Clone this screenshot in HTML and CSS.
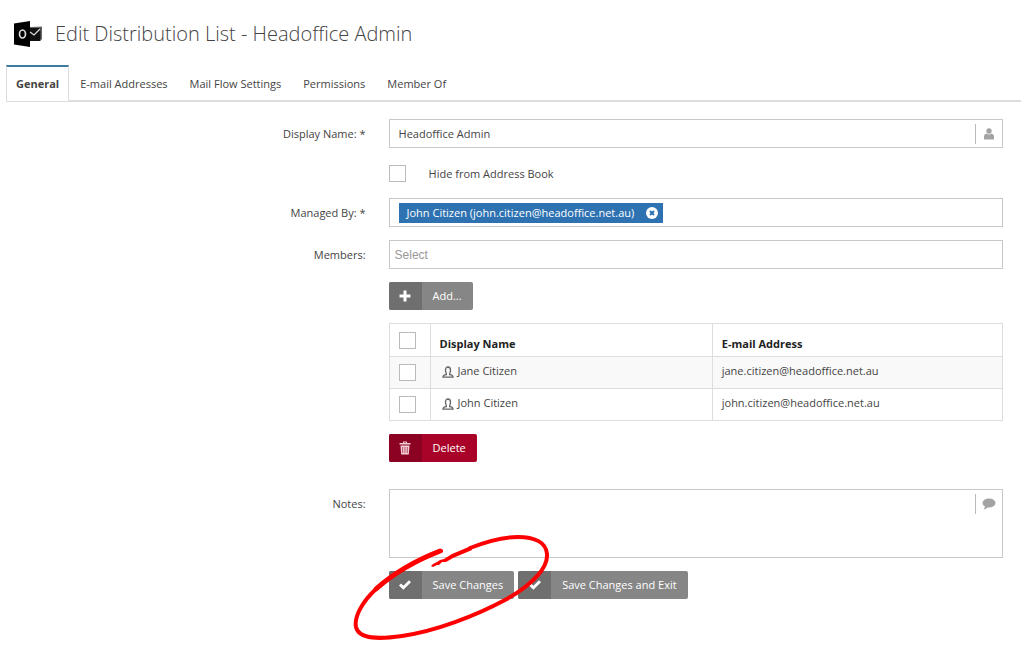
FILE: index.html
```html
<!DOCTYPE html>
<html lang="en">
<head>
  <meta charset="UTF-8" />
  <meta name="viewport" content="width=device-width, initial-scale=1.0"/>
  <title>Edit Distribution List - Headoffice Admin</title>
  <link rel="stylesheet" href="styles.css">
</head>
<body>

  <!-- shared icons -->
  <svg class="sprite" aria-hidden="true">
    <symbol id="icon-check" viewBox="0 0 14 12"><path d="M1 6.5 3 4.5 5.4 6.8 11 1.2 13 3.2 5.4 10.8Z"/></symbol>
    <symbol id="icon-person" viewBox="0 0 12 12"><path d="M4.4 8.6C4.4 7.2 3.5 6.2 3.5 4.2 3.5 2.2 4.4 1 6 1s2.5 1.2 2.5 3.2C8.5 6.2 7.6 7.2 7.6 8.6c1.8.2 3.4.8 3.4 2.5H1C1 9.4 2.6 8.8 4.4 8.6Z" fill="none" stroke="#666" stroke-width="1.3"/></symbol>
  </svg>

  <header class="page-header">
    <svg class="logo" viewBox="0 0 28 28" aria-hidden="true">
      <path d="M16 7l12-.5v13L16 21z" fill="#666"/>
      <path d="M16 8h10.500v13H16z" fill="#111"/>
      <path d="M0 3.500 16 1v26L0 24.500Z" fill="#000"/>
      <path d="m16 12 4 3 6-6" fill="none" stroke="#ddd" stroke-width="1.2"/>
      <ellipse cx="8.500" cy="14" rx="3" ry="4" fill="none" stroke="#ddd" stroke-width="1.700"/>
    </svg>
    <h1>Edit Distribution List - Headoffice Admin</h1>
  </header>

  <nav class="tabs">
    <a class="active" href="#general">General</a>
    <a href="#addresses">E-mail Addresses</a>
    <a href="#mailflow">Mail Flow Settings</a>
    <a href="#permissions">Permissions</a>
    <a href="#memberof">Member Of</a>
  </nav>

  <form class="form" id="general">
    <div class="row">
      <label for="displayName">Display Name: *</label>
      <div class="field">
        <input type="text" id="displayName" value="Headoffice Admin">
        <span class="addon">
          <svg width="12" height="12" viewBox="0 0 12 12" fill="#a3a3a3"><circle cx="6" cy="3" r="2.700"/><path d="M1 11V9q0-3 2.500-3.500Q6 7.500 8.500 5.500 11 6 11 9v2q0 .5-.5.5h-9Q1 11.500 1 11Z"/></svg>
        </span>
      </div>
    </div>

    <div class="row">
      <div class="control check">
        <input type="checkbox" id="hide">
        <label for="hide">Hide from Address Book</label>
      </div>
    </div>

    <div class="row">
      <label for="managedBy">Managed By: *</label>
      <div class="field">
        <span class="tag">John Citizen (john.citizen@headoffice.net.au)
          <button type="button" aria-label="Remove John Citizen">
            <svg width="12" height="12" viewBox="0 0 12 12"><circle cx="6" cy="6" r="6" fill="#fff"/><path d="m4 4 4 4M8 4 4 8" stroke="#2e72b2" stroke-width="2"/></svg>
          </button>
        </span>
        <input type="text" id="managedBy">
      </div>
    </div>

    <div class="row">
      <label for="members">Members:</label>
      <div class="field">
        <input type="text" id="members" class="select" placeholder="Select">
      </div>
    </div>

    <div class="row">
      <div class="control">
        <button type="button" class="btn">
          <span class="icon"><svg width="12" height="12" viewBox="0 0 12 12"><path d="M4.500.5h3v4h4v3h-4v4h-3v-4h-4v-3h4Z"/></svg></span>
          <span class="text">Add...</span>
        </button>
      </div>
    </div>

    <div class="row">
      <table class="control">
        <thead>
          <tr>
            <th class="tick"><input type="checkbox" aria-label="Select all"></th>
            <th class="name">Display Name</th>
            <th>E-mail Address</th>
          </tr>
        </thead>
        <tbody>
          <tr>
            <td class="tick"><input type="checkbox" aria-label="Select Jane Citizen"></td>
            <td class="name"><svg width="12" height="12"><use href="#icon-person"/></svg>Jane Citizen</td>
            <td>jane.citizen@headoffice.net.au</td>
          </tr>
          <tr>
            <td class="tick"><input type="checkbox" aria-label="Select John Citizen"></td>
            <td class="name"><svg width="12" height="12"><use href="#icon-person"/></svg>John Citizen</td>
            <td>john.citizen@headoffice.net.au</td>
          </tr>
        </tbody>
      </table>
    </div>

    <div class="row">
      <div class="control">
        <button type="button" class="btn danger">
          <span class="icon"><svg width="12" height="14" viewBox="0 0 12 14"><path d="M4 2V.5h4V2h3.500v1.500H.5V2ZM5 2h2v-.5H5ZM1.500 4.500h9l-.7 9H2.200ZM3.500 6v6h.6V6Zm2.200 0v6h.6V6Zm2.200 0v6h.6V6Z" fill="#f3cfd8" fill-rule="evenodd"/></svg></span>
          <span class="text">Delete</span>
        </button>
      </div>
    </div>

    <div class="row notes">
      <label for="notes">Notes:</label>
      <div class="field">
        <textarea id="notes"></textarea>
        <span class="addon">
          <svg width="14" height="12" viewBox="0 0 14 12" fill="#a3a3a3"><ellipse cx="7" cy="5" rx="6.500" ry="4.500"/><path d="M3 8Q3 10 1.500 11.500 4.500 11 6 9Z"/></svg>
        </span>
      </div>
    </div>

    <div class="row">
      <div class="control actions">
        <button type="submit" class="btn">
          <span class="icon"><svg width="14" height="12"><use href="#icon-check"/></svg></span>
          <span class="text">Save Changes</span>
        </button>
        <button type="submit" class="btn">
          <span class="icon"><svg width="14" height="12"><use href="#icon-check"/></svg></span>
          <span class="text">Save Changes and Exit</span>
        </button>
        <!-- hand drawn ring round Save Changes -->
        <svg class="ring" viewBox="0 0 220 130" aria-hidden="true">
          <path d="M101 31C77 40 55 52 36 69 22 82 14 97 16 107 19 120 41 119 62 116 96 111 135 96 165 80 194 64 208 47 207 34 206 22 194 17 178 17 162 17 145 22 130 28" fill="none" stroke="#f00" stroke-width="4" stroke-linecap="round" stroke-linejoin="round"/>
          <path d="M100 31C77 40 55 52 36 69" fill="none" stroke="#f00" stroke-width="5" stroke-linecap="round"/>
          <path d="M131 26 112 34 104 39 100 40 97 42 93 44 91 46 93 47 97 45 99 45 102 42 106 42 113 38 132 30Z" fill="#f00"/>
        </svg>
      </div>
    </div>
  </form>

</body>
</html>
```
FILE: styles.css
```css
* {
  box-sizing: border-box;
}

body {
  margin: 0;
  background: #fff;
  color: #444;
  font-family: "Open Sans", "Noto Sans", sans-serif;
  font-size: 11px;
  line-height: 16px;
}

input, textarea, button {
  font: inherit;
  color: inherit;
}

svg {
  display: block;
  flex: none;
}

.sprite {
  display: none;
}

.page-header {
  display: flex;
  align-items: center;
  gap: 13px;
  padding: 20px 14px 17px;
}

.logo {
  width: 28px;
  height: 28px;
}

h1 {
  margin: 0;
  font-size: 20px;
  font-weight: 300;
  line-height: 28px;
}

.tabs {
  display: flex;
  margin-left: 6px;
  border-bottom: 2px solid #ddd;
}

.tabs a {
  padding: 11px 11px 7px;
  color: #444;
  text-decoration: none;
}

.tabs .active {
  margin-bottom: -2px;
  padding: 9px 9px 9px;
  border: 1px solid #ddd;
  border-top: 2px solid #3c7c9e;
  background: #fff;
  font-weight: bold;
}

.form {
  display: grid;
  gap: 13px;
  padding: 17px 18px 54px 7px;
}

.row {
  display: grid;
  grid-template-columns: 36% 1fr;
  column-gap: 23px;
}

.row > label {
  padding-top: 7px;
  text-align: right;
}

.control {
  grid-column: 2;
}

.field {
  display: flex;
  align-items: flex-start;
  min-height: 29px;
  border: 1px solid #c8c8c8;
}

.field input, .field textarea {
  flex: 1;
  min-width: 0;
  height: 27px;
  padding: 0 9px;
  border: 0;
  outline: 0;
  background: none;
}

.field textarea {
  height: 67px;
  padding: 6px 9px;
  resize: none;
}

.field .select {
  padding: 0 5px;
  font-family: "Liberation Sans", Arial, sans-serif;
  font-size: 12px;
}

.select::placeholder {
  color: #999;
}

.addon {
  display: flex;
  align-items: center;
  justify-content: center;
  width: 27px;
  height: 20px;
  margin-top: 4px;
  border-left: 1px solid #bbb;
}

.check {
  display: flex;
  align-items: center;
  gap: 23px;
  padding: 4px 0 3px;
}

input[type="checkbox"] {
  appearance: none;
  display: block;
  width: 17px;
  height: 17px;
  margin: 0;
  border: 1px solid #bbb;
  background: #fff;
}

.tag {
  display: flex;
  align-items: center;
  gap: 12px;
  height: 20px;
  margin: 4px 0 0 9px;
  padding: 0 5px 0 8px;
  background: #2e72b2;
  color: #fff;
}

.tag button {
  padding: 0;
  border: 0;
  background: none;
}

.btn {
  display: inline-flex;
  height: 28px;
  padding: 0;
  border: 0;
  border-radius: 2px;
  overflow: hidden;
  background: #868686;
  color: #fff;
  line-height: 28px;
  vertical-align: top;
}

.btn .icon {
  display: flex;
  align-items: center;
  justify-content: center;
  width: 33px;
  height: 28px;
  background: #6f6f6f;
  fill: #fff;
}

.btn .text {
  padding: 0 11px;
}

.danger {
  background: #a90329;
}

.danger .icon {
  background: #8c0222;
}

table {
  width: 100%;
  border-collapse: collapse;
  table-layout: fixed;
}

th, td {
  height: 32px;
  padding: 0 9px 4px;
  border: 1px solid #ddd;
  text-align: left;
}

th {
  height: 33px;
  padding: 8px 9px 0;
  color: #222;
}

.tick {
  width: 41px;
  padding: 0 9px;
}

.name {
  width: 46%;
}

td.name svg {
  display: inline-block;
  margin: 0 4px 0 2px;
  vertical-align: -3px;
}

tbody tr:first-child {
  background: #f9f9f9;
}

.notes {
  margin-top: 14px;
}

.actions {
  position: relative;
  display: flex;
  gap: 4px;
}

.ring {
  position: absolute;
  top: -51px;
  left: -49px;
  width: 220px;
  height: 130px;
  pointer-events: none;
}
```
